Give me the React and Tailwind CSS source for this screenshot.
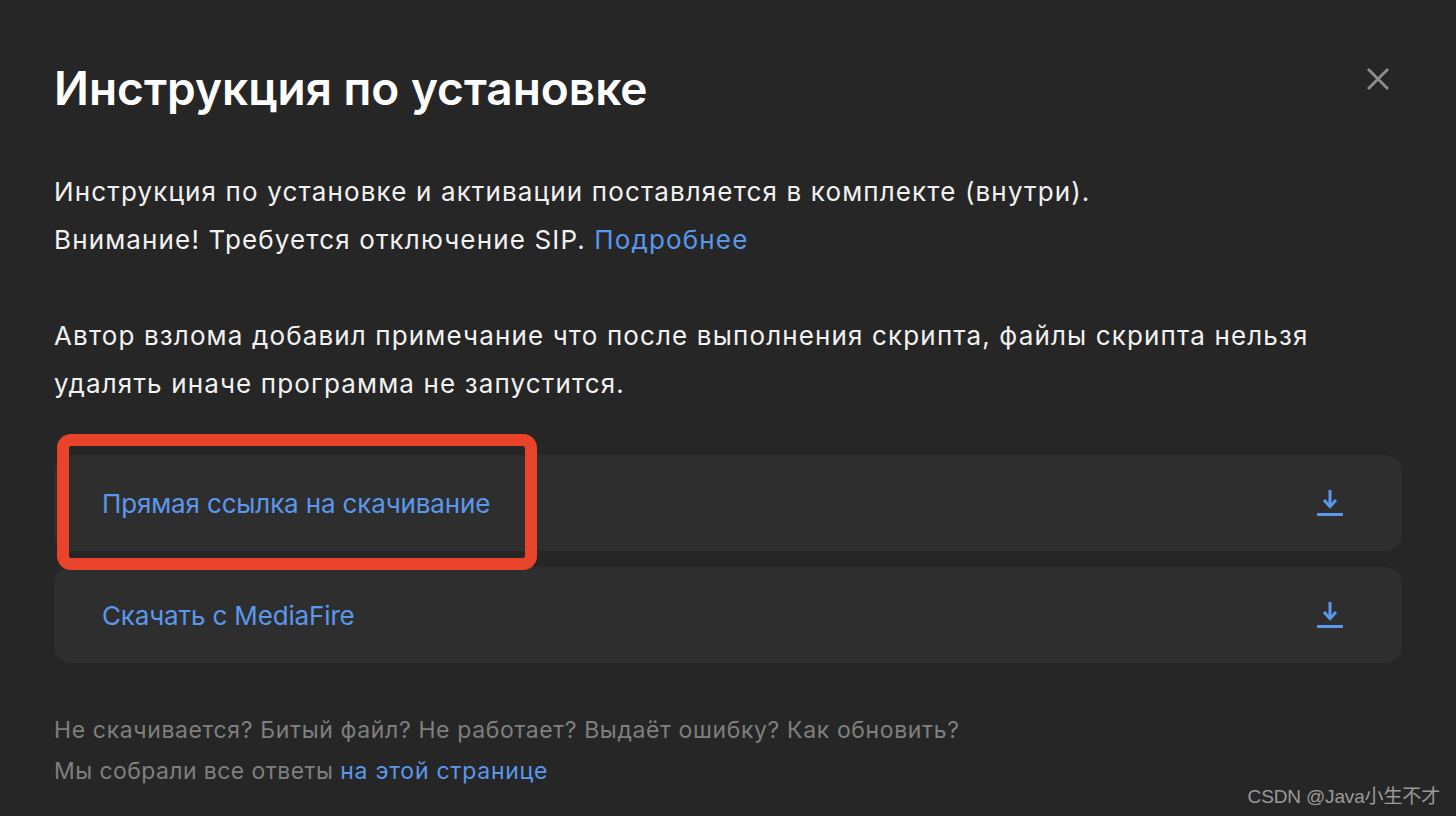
import React from 'react';

const DownloadIcon = () => (
  <svg width="28" height="28" viewBox="0 0 28 28" fill="none" stroke="#5a98ec" strokeWidth="3" className="shrink-0">
    <path d="M14 1V17" />
    <path d="M8 11L14 17.5L20 11" />
    <path d="M1 25.5H27" />
  </svg>
);

const DownloadRow = ({ label }) => (
  <a className="flex h-24 items-center justify-between rounded-2xl bg-[#2e2e2e] pl-12 pr-[58px] text-[26px] tracking-[-0.15px] text-[#5a98ec]">
    <span>{label}</span>
    <DownloadIcon />
  </a>
);

export default function App() {
  return (
    <div className="relative h-[816px] w-[1456px] overflow-hidden bg-[#262626] px-[54px] pt-[54px] font-['Inter','Noto_Sans',sans-serif] text-white">
      <div className="flex items-start justify-between">
        <h1 className="text-[46px] leading-[68px] font-semibold">Инструкция по установке</h1>
        <button className="mt-[13px] mr-[12px] text-[#8e8e8e]">
          <svg width="24" height="24" viewBox="0 0 24 24" fill="none" stroke="currentColor" strokeWidth="2.8">
            <path d="M2 2L22 22M22 2L2 22" />
          </svg>
        </button>
      </div>

      <div className="mt-[46px] text-[26px] leading-[48px] tracking-[1.14px] text-[#f2f2f2]">
        <p>Инструкция по установке и активации поставляется в комплекте (внутри).</p>
        <p>
          Внимание! Требуется отключение SIP. <a className="text-[#5a98ec]">Подробнее</a>
        </p>
        <p className="mt-12">Автор взлома добавил примечание что после выполнения скрипта, файлы скрипта нельзя</p>
        <p>удалять иначе программа не запустится.</p>
      </div>

      <div className="mt-[47px] flex flex-col gap-4">
        <DownloadRow label="Прямая ссылка на скачивание" />
        <DownloadRow label="Скачать с MediaFire" />
      </div>

      <div className="mt-[47px] text-[23px] leading-[41px] tracking-[0.63px] text-[#7f7f7f]">
        <p>Не скачивается? Битый файл? Не работает? Выдаёт ошибку? Как обновить?</p>
        <p className="tracking-[0.42px]">
          Мы собрали все ответы <a className="tracking-[0.75px] text-[#5a98ec]">на этой странице</a>
        </p>
      </div>

      {/* red annotation over the first row */}
      <div className="absolute top-[434px] left-[57px] h-[136px] w-[480px] rounded-[14px] border-[12px] border-[#e9432a]" />

      <div className="absolute top-[784px] right-[16px] font-['Liberation_Sans','Noto_Sans_CJK_SC',sans-serif] text-[19px] leading-[26px] tracking-[-0.15px] text-[#9a9a9a]">
        CSDN @Java小生不才
      </div>
    </div>
  );
}
